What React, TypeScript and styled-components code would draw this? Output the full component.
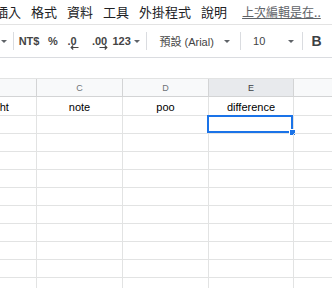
import React from 'react'
import styled, { createGlobalStyle } from 'styled-components'

const GlobalStyle = createGlobalStyle`
  html, body {
    margin: 0;
    padding: 0;
    background: #fff;
  }
  body {
    width: 332px;
    height: 288px;
    overflow: hidden;
    font-family: 'Liberation Sans', Arial, sans-serif;
  }
`

const menus = ['插入', '格式', '資料', '工具', '外掛程式', '說明']
const rowCount = 11

const Caret = () => <CaretShape />

const DecimalArrow = ({ dir }: { dir: 'left' | 'right' }) => (
  <Arrow $dir={dir} width="9" height="5" viewBox="0 0 9 5">
    {dir === 'left' ? (
      <path d="M8.5 2.5H1.2M3.2 0.5L1.2 2.5L3.2 4.5" />
    ) : (
      <path d="M0.5 2.5H7.8M5.8 0.5L7.8 2.5L5.8 4.5" />
    )}
  </Arrow>
)

const App: React.FC = () => {
  return (
    <>
      <GlobalStyle />
      <Page>
        <MenuBar>
          {menus.map((m) => (
            <MenuItem key={m}>{m}</MenuItem>
          ))}
          <LastEdit>上次編輯是在..</LastEdit>
        </MenuBar>

        <Toolbar>
          <ToolItem $w={13} $pl={1}>
            <Caret />
          </ToolItem>
          <Divider />
          <ToolItem $w={30} $pl={5}>NT$</ToolItem>
          <ToolItem $w={20} $pl={5}>%</ToolItem>
          <ToolItem $w={25} $pl={5}>
            <Decimal>
              .0
              <DecimalArrow dir="left" />
            </Decimal>
          </ToolItem>
          <ToolItem $w={21} $pl={5}>
            <Decimal>
              .00
              <DecimalArrow dir="right" />
            </Decimal>
          </ToolItem>
          <ToolItem $w={40} $pl={5}>
            123
            <CaretGap>
              <Caret />
            </CaretGap>
          </ToolItem>
          <Divider />
          <ToolItem $w={95} $pl={12} $between>
            <FontName>預設 (Arial)</FontName>
            <CaretEnd>
              <Caret />
            </CaretEnd>
          </ToolItem>
          <Divider />
          <ToolItem $w={62} $pl={12} $between>
            <SizeValue>10</SizeValue>
            <CaretEnd $pr={8}>
              <Caret />
            </CaretEnd>
          </ToolItem>
          <Divider />
          <ToolItem $w={30} $pl={9}>
            <BoldIcon>B</BoldIcon>
          </ToolItem>
        </Toolbar>

        <FormulaBar />

        <Sheet>
          <Grid>
            <HeaderCell />
            <HeaderCell>C</HeaderCell>
            <HeaderCell>D</HeaderCell>
            <HeaderCell $active>E</HeaderCell>
            <HeaderCell />

            <Cell $first>weight</Cell>
            <Cell $first>note</Cell>
            <Cell $first>poo</Cell>
            <Cell $first>difference</Cell>
            <Cell $first />

            {Array.from({ length: rowCount }).map((_, r) => (
              <React.Fragment key={r}>
                <Cell />
                <Cell />
                <Cell />
                <Cell>
                  {r === 0 && (
                    <Selection>
                      <FillHandle />
                    </Selection>
                  )}
                </Cell>
                <Cell />
              </React.Fragment>
            ))}
          </Grid>
        </Sheet>
      </Page>
    </>
  )
}

export default App

const Page = styled.div`
  width: 332px;
  height: 288px;
  overflow: hidden;
  display: flex;
  flex-direction: column;
`

const MenuBar = styled.div`
  height: 24px;
  flex: none;
  display: flex;
  align-items: center;
  gap: 10px;
  margin-left: -5px;
  font-family: 'Noto Sans CJK TC', 'Liberation Sans', sans-serif;
  font-size: 13px;
  color: #202124;
  white-space: nowrap;
`
const MenuItem = styled.span`
  line-height: 24px;
`
const LastEdit = styled.span`
  margin-left: 5px;
  font-size: 12px;
  line-height: 24px;
  color: #5f6368;
  text-decoration: underline;
`

const Toolbar = styled.div`
  height: 32px;
  flex: none;
  display: flex;
  align-items: center;
  border-top: 1px solid #e3e3e3;
  border-bottom: 1px solid #dadce0;
  font: bold 11px 'Liberation Sans', Arial, sans-serif;
  color: #444;
  white-space: nowrap;
`
const ToolItem = styled.div<{ $w: number; $pl: number; $between?: boolean }>`
  width: ${(p) => p.$w}px;
  padding-left: ${(p) => p.$pl}px;
  box-sizing: border-box;
  height: 100%;
  display: flex;
  align-items: center;
  justify-content: ${(p) => (p.$between ? 'space-between' : 'flex-start')};
`
const Divider = styled.div`
  width: 1px;
  height: 18px;
  background: #dadce0;
  flex: none;
`
const CaretShape = styled.span`
  display: block;
  width: 0;
  height: 0;
  border-left: 3px solid transparent;
  border-right: 3px solid transparent;
  border-top: 3px solid #5f6368;
`
const CaretGap = styled.span`
  margin-left: 3px;
`
const CaretEnd = styled.span<{ $pr?: number }>`
  padding-right: ${(p) => p.$pr ?? 10}px;
`
const Decimal = styled.span`
  position: relative;
  display: inline-block;
`
const Arrow = styled.svg<{ $dir: 'left' | 'right' }>`
  position: absolute;
  top: 10px;
  ${(p) => (p.$dir === 'left' ? 'left: 2px;' : 'right: -1px;')}
  fill: none;
  stroke: #444;
  stroke-width: 1.2;
`
const FontName = styled.span`
  font-family: 'Liberation Sans', 'Noto Sans CJK TC', sans-serif;
  font-weight: normal;
`
const SizeValue = styled.span`
  font-weight: normal;
`
const BoldIcon = styled.span`
  font-size: 14px;
  font-weight: bold;
  color: #3c4043;
`

const FormulaBar = styled.div`
  height: 20px;
  flex: none;
`

const Sheet = styled.div`
  flex: 1;
  overflow: hidden;
`
const Grid = styled.div`
  margin-left: -50px;
  display: grid;
  grid-template-columns: 87px 86px 86px 85px 86px;
  border-top: 1px solid #e2e3e3;
`
const HeaderCell = styled.div<{ $active?: boolean }>`
  height: 18px;
  box-sizing: border-box;
  display: flex;
  align-items: center;
  justify-content: center;
  background: ${(p) => (p.$active ? '#e8eaed' : '#f8f9fa')};
  border-right: 1px solid #d3d4d5;
  border-bottom: 1px solid #d3d4d5;
  font-size: 9px;
  color: ${(p) => (p.$active ? '#3c4043' : '#6f7378')};
`
const Cell = styled.div<{ $first?: boolean }>`
  position: relative;
  height: ${(p) => (p.$first ? 19 : 18)}px;
  box-sizing: border-box;
  display: flex;
  align-items: flex-end;
  justify-content: center;
  padding-bottom: 1px;
  border-right: 1px solid #e2e3e3;
  border-bottom: 1px solid #e2e3e3;
  font-size: 11px;
  line-height: 13px;
  color: #000;
  white-space: nowrap;
`
const Selection = styled.div`
  position: absolute;
  left: -2px;
  top: -1px;
  right: 0;
  bottom: 0;
  border: 2px solid #1a73e8;
`
const FillHandle = styled.div`
  position: absolute;
  right: -5px;
  bottom: -5px;
  width: 5px;
  height: 5px;
  background: #1a73e8;
  border: 1px solid #fff;
`
